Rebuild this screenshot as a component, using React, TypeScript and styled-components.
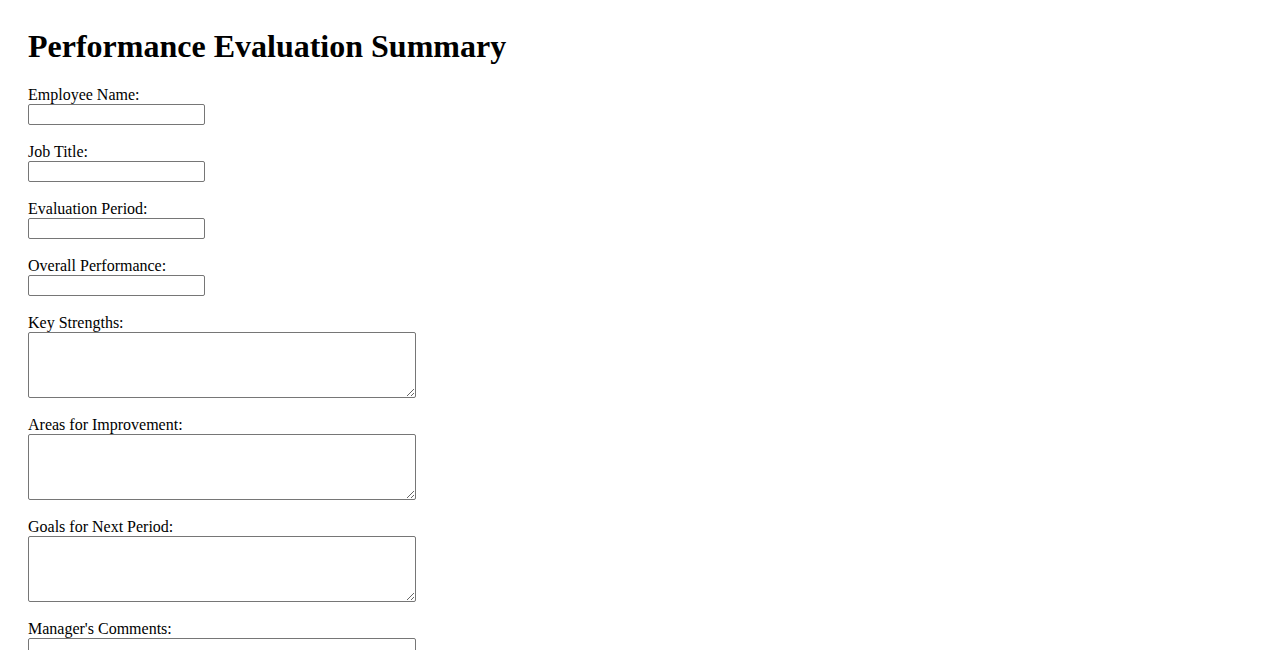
import React from "react";
import styled, { createGlobalStyle } from "styled-components";

const GlobalStyle = createGlobalStyle`
  body {
    margin: 8px;
    font-family: "Liberation Serif", "Times New Roman", serif;
    font-size: 16px;
    color: #000;
    background: #fff;
  }
`;

const Page = styled.div`
  padding: 20px;
`;

const Title = styled.h1`
  margin: 0 0 21px;
  font-size: 32px;
  font-weight: bold;
  line-height: 37px;
`;

const Form = styled.form`
  display: flex;
  flex-direction: column;
  gap: 18px;
`;

const Field = styled.div`
  display: flex;
  flex-direction: column;
  align-items: flex-start;
`;

const Label = styled.label`
  display: block;
  line-height: 18px;
  height: 18px;
`;

const TextInput = styled.input`
  box-sizing: border-box;
  width: 177px;
  height: 21px;
  margin: 0;
  padding: 1px 2px;
  border: 1px solid #767676;
  border-radius: 2px;
  font-family: "Liberation Sans", Arial, sans-serif;
  font-size: 13.33px;
  background: #fff;
`;

const TextArea = styled.textarea`
  box-sizing: border-box;
  width: 388px;
  height: 66px;
  margin: 0;
  padding: 2px;
  border: 1px solid #767676;
  border-radius: 2px;
  font-family: "Liberation Mono", monospace;
  font-size: 13.33px;
  background: #fff;
`;

const inputs = ["Employee Name", "Job Title", "Evaluation Period", "Overall Performance"];
const areas = ["Key Strengths", "Areas for Improvement", "Goals for Next Period", "Manager's Comments"];

export default function App() {
  return (
    <>
      <GlobalStyle />
      <Page>
        <Title>Performance Evaluation Summary</Title>
        <Form>
          {inputs.map((l, i) => (
            <Field key={l}>
              <Label htmlFor={`in${i}`}>{l}:</Label>
              <TextInput id={`in${i}`} type="text" />
            </Field>
          ))}
          {areas.map((l, i) => (
            <Field key={l}>
              <Label htmlFor={`ta${i}`}>{l}:</Label>
              <TextArea id={`ta${i}`} />
            </Field>
          ))}
        </Form>
      </Page>
    </>
  );
}
